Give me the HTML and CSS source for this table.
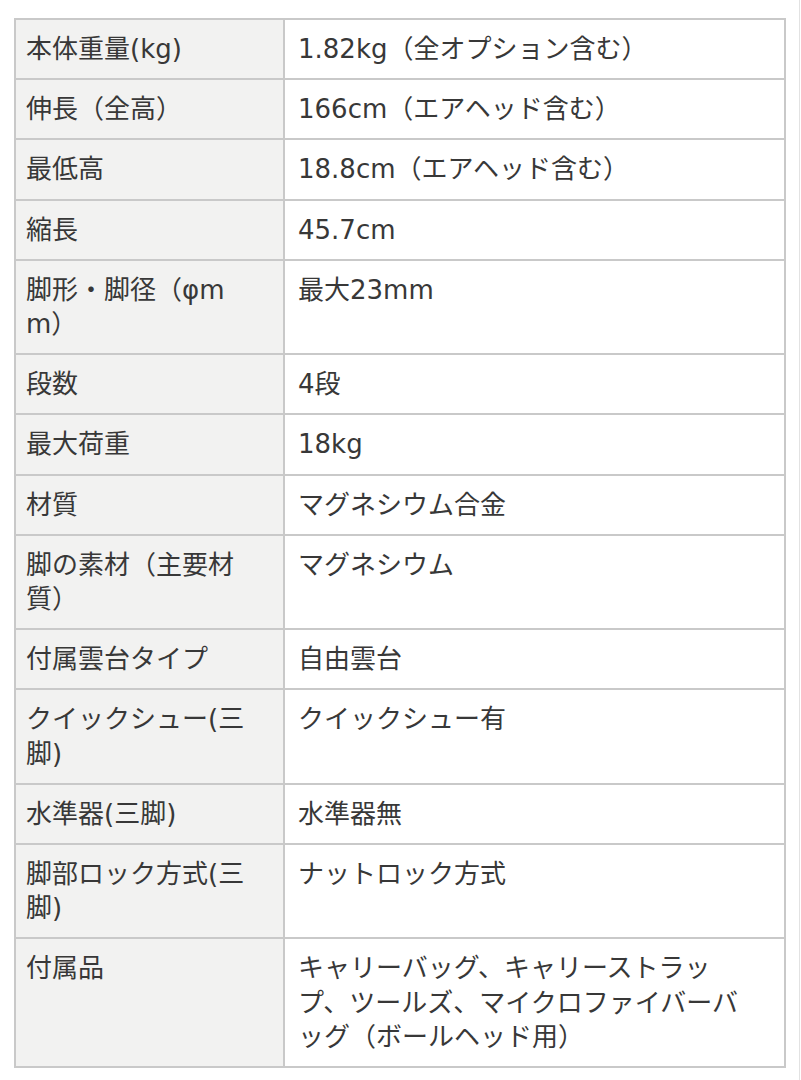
FILE: index.html
```html
<!DOCTYPE html>
<html lang="ja">
<head>
<meta charset="utf-8">
<title>仕様</title>
<link rel="stylesheet" href="styles.css">
</head>
<body>
<div class="page">
  <div class="spec">
    <div class="key">本体重量(kg)</div><div class="val">1.82kg（全オプション含む）</div>
    <div class="key">伸長（全高）</div><div class="val">166cm（エアヘッド含む）</div>
    <div class="key">最低高</div><div class="val">18.8cm（エアヘッド含む）</div>
    <div class="key">縮長</div><div class="val">45.7cm</div>
    <div class="key">脚形・脚径（φmm）</div><div class="val">最大23mm</div>
    <div class="key">段数</div><div class="val">4段</div>
    <div class="key">最大荷重</div><div class="val">18kg</div>
    <div class="key">材質</div><div class="val">マグネシウム合金</div>
    <div class="key">脚の素材（主要材質）</div><div class="val">マグネシウム</div>
    <div class="key">付属雲台タイプ</div><div class="val">自由雲台</div>
    <div class="key">クイックシュー(三脚)</div><div class="val">クイックシュー有</div>
    <div class="key">水準器(三脚)</div><div class="val">水準器無</div>
    <div class="key">脚部ロック方式(三脚)</div><div class="val">ナットロック方式</div>
    <div class="key">付属品</div><div class="val">キャリーバッグ、キャリーストラップ、ツールズ、マイクロファイバーバッグ（ボールヘッド用）</div>
  </div>
</div>
</body>
</html>
```

FILE: styles.css
```css
html, body {
  margin: 0;
  padding: 0;
  background: #ffffff;
}

.page {
  width: 800px;
  min-height: 1080px;
  border-right: 1px solid #e2e2e2;
  padding-top: 18px;
  padding-left: 14px;
  box-sizing: border-box;
}

.spec {
  display: grid;
  grid-template-columns: 269px 501px;
  width: 770px;
  border-top: 2px solid #c9c9c9;
  border-left: 2px solid #c9c9c9;
  font-family: "DejaVu Sans", "Noto Sans CJK JP", sans-serif;
  font-size: 26px;
  line-height: 34.2px;
  color: #383838;
}

.key,
.val {
  box-sizing: border-box;
  border-right: 2px solid #c9c9c9;
  border-bottom: 2px solid #c9c9c9;
  word-break: break-all;
}

.key {
  background: #f2f2f1;
  padding: 12px 36px 12px 10px;
}

.val {
  background: #ffffff;
  padding: 12px 31px 12px 13px;
}
```
